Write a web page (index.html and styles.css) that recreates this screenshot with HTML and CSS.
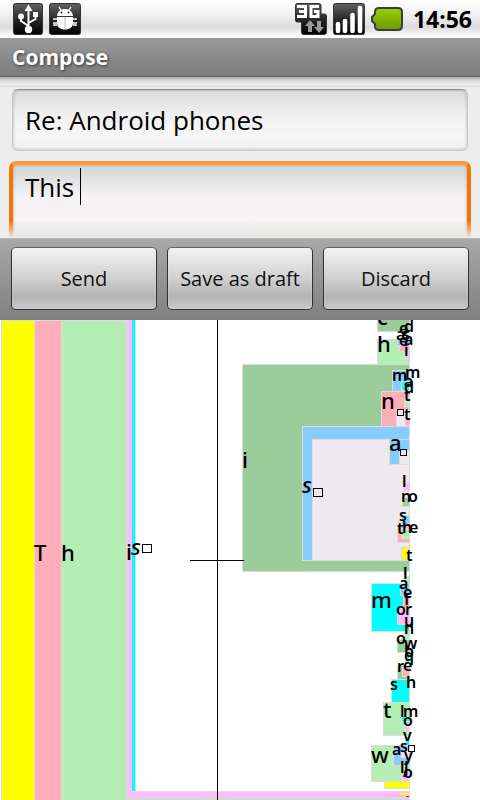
FILE: index.html
```html
<!DOCTYPE html>
<html lang="en">
<head>
<meta charset="utf-8">
<meta name="viewport" content="width=device-width, initial-scale=1">
<title>Compose</title>
<link rel="stylesheet" href="styles.css">
</head>
<body>
<div class="status">
  <svg class="icon" width="30" height="32" viewBox="0 0 30 32" aria-hidden="true">
    <defs><linearGradient id="dark" x1="0" y1="0" x2="0" y2="1"><stop offset="0" stop-color="#626262"/><stop offset=".5" stop-color="#292929"/><stop offset="1" stop-color="#000"/></linearGradient></defs>
    <rect x=".5" y=".5" width="29" height="31" rx="2" fill="url(#dark)" stroke="#333"/>
    <path d="M15.500 5v21M15.500 23L8 18v-5M15.500 20l7-4v-5" fill="none" stroke="#fff" stroke-width="2"/>
    <path d="M15.500 1.500L19.500 8h-8z" fill="#fff"/><circle cx="8" cy="13.500" r="3" fill="#fff"/><rect x="20" y="9" width="5" height="5" fill="#fff"/><circle cx="15.500" cy="26.500" r="3.700" fill="#fff"/>
  </svg>
  <svg class="icon" width="32" height="32" viewBox="0 0 32 32" aria-hidden="true">
    <rect x=".5" y=".5" width="31" height="31" rx="2" fill="url(#dark)" stroke="#333"/>
    <path d="M10 4l2.500 4M22 4l-2.500 4M5 17v-1h3M4 20h4M5 23v-1h3M27 17v-1h-3M28 20h-4M27 23v-1h-3" fill="none" stroke="#fff" stroke-width="1.400"/>
    <path d="M8 13C8.500 3.500 23.500 3.500 24 13zM8 14h16v6c0 4-3 6.500-8 6.500S8 24 8 20z" fill="#fff"/>
    <path d="M16 14v12" stroke="#bbb"/><circle cx="12.500" cy="9.500" r="1" fill="#222"/><circle cx="19.500" cy="9.500" r="1" fill="#222"/>
  </svg>
  <span class="spacer"></span>
  <svg class="icon" width="32" height="32" viewBox="0 0 32 32" aria-hidden="true">
    <path d="M2 .500h22q2 0 2 2V11h3.500q2 0 2 2v16q0 2.500-2 2.500h-21q-2 0-2-2V19H2q-1.500 0-1.500-2V2.500Q.500.500 2 .500z" fill="url(#dark)" stroke="#333"/>
    <path d="M2 3.500h8.500v10H2M4 8.500h6.500M24 3.500h-8v10h7V8.500h-4" fill="none" stroke="#fff" stroke-width="3"/>
    <path d="M15 17l5 6h-3v6h-4v-6h-3zM24 30l5-6h-3v-6h-4v6h-3z" fill="#999"/>
  </svg>
  <svg class="icon" width="32" height="32" viewBox="0 0 32 32" aria-hidden="true">
    <rect x=".5" y=".5" width="31" height="31" rx="2" fill="url(#dark)" stroke="#333"/>
    <path d="M5 21v7M12 18v10M19.500 12v16M27 5v23" stroke="#fff" stroke-width="4.600" stroke-linecap="round"/>
  </svg>
  <svg class="icon" width="32" height="24" viewBox="0 0 32 24" aria-hidden="true">
    <defs><linearGradient id="charge" x1="0" y1="0" x2="0" y2="1"><stop offset="0" stop-color="#98d000"/><stop offset="1" stop-color="#6c9b00"/></linearGradient></defs>
    <path d="M8 1h19q4 0 4 4v14q0 4-4 4H8q-4 0-4-4v-2l-3-3v-4l3-3V5q0-4 4-4z" fill="url(#charge)" stroke="#3c3c44" stroke-width="2"/>
  </svg>
  <time class="clock">14:56</time>
</div>
<header class="titlebar"><h1>Compose</h1></header>
<form class="compose">
  <div class="fields">
    <input class="subject" type="text" aria-label="Subject" value="Re: Android phones">
    <div class="message">
      <textarea class="body" aria-label="Message" spellcheck="false">This </textarea>
      <span class="caret"></span>
    </div>
  </div>
  <div class="actions">
    <button type="button">Send</button>
    <button type="button">Save as draft</button>
    <button type="button">Discard</button>
  </div>
</form>
<main class="keyboard">
<svg class="canvas" viewBox="0 0 480 480" role="img" aria-label="Letter zoom input">
  <defs><clipPath id="field"><path d="M0 0H410V480H0z"/></clipPath></defs>
  <g class="boxes" clip-path="url(#field)">
    <rect class="yellow" x="1" y="0" width="33" height="482"/>
    <rect class="pink" x="34" y="0" width="27" height="482"/>
    <rect class="mint" x="61" y="0" width="349" height="482"/>
    <rect class="lilac" x="126" y="-2" width="284" height="480"/>
    <rect class="cyan" x="132" y="-2" width="10" height="473" stroke="none"/>
    <rect class="white" x="135" y="-2" width="275" height="473"/>
    <path class="cyan" d="M132 0h3v471h-3z"/>
    <rect class="green" x="377" y="-2" width="33" height="13"/>
    <rect class="mint" x="377" y="19" width="33" height="25"/>
    <rect class="blue" x="397" y="19" width="13" height="6"/>
    <rect class="pink" x="399" y="25" width="11" height="6"/>
    <rect class="lilac" x="404" y="32" width="6" height="7"/>
    <rect class="green" x="242" y="44" width="168" height="207"/>
    <rect class="blue" x="392" y="50" width="18" height="21"/>
    <rect class="cyan" x="401" y="61" width="9" height="9"/>
    <rect class="pink" x="381" y="71" width="29" height="35"/>
    <rect class="mint" x="404" y="77" width="6" height="9"/>
    <rect class="pale" x="396" y="89" width="14" height="17"/>
    <rect class="pink" x="405" y="98" width="5" height="7"/>
    <rect class="blue" x="302" y="106" width="108" height="134"/>
    <rect class="pale" x="312" y="119" width="98" height="121"/>
    <rect class="blue" x="389" y="119" width="21" height="25"/>
    <rect class="pale" x="399" y="130" width="11" height="14"/>
    <rect class="lilac" x="403" y="162" width="7" height="9"/>
    <rect class="green" x="402" y="177" width="8" height="9"/>
    <rect class="blue" x="401" y="195" width="9" height="12"/>
    <rect class="pink" x="397" y="205" width="13" height="17"/>
    <rect class="mint" x="401" y="208" width="9" height="10"/>
    <rect class="yellow" x="401" y="227" width="9" height="12"/>
    <rect class="mint" x="405" y="256" width="5" height="7"/>
    <rect class="cyan" x="371" y="263" width="39" height="48"/>
    <rect class="blue" x="400" y="263" width="10" height="12"/>
    <rect class="pink" x="403" y="275" width="7" height="13"/>
    <rect class="lilac" x="397" y="288" width="13" height="16"/>
    <rect class="mint" x="404" y="311" width="6" height="8"/>
    <rect class="green" x="397" y="319" width="13" height="13"/>
    <rect class="cyan" x="405" y="331" width="5" height="12"/>
    <rect class="green" x="397" y="345" width="13" height="14"/>
    <rect class="pink" x="402" y="347" width="8" height="9"/>
    <rect class="cyan" x="391" y="359" width="19" height="23"/>
    <rect class="mint" x="383" y="382" width="27" height="33"/>
    <rect class="cyan" x="401" y="396" width="9" height="5"/>
    <rect class="lilac" x="405" y="405" width="5" height="5"/>
    <rect class="cyan" x="405" y="417" width="5" height="7"/>
    <rect class="mint" x="371" y="425" width="39" height="36"/>
    <rect class="blue" x="393" y="425" width="17" height="20"/>
    <rect class="pale" x="401" y="430" width="9" height="7"/>
    <rect class="lilac" x="401" y="452" width="9" height="8"/>
    <rect class="yellow" x="384" y="461" width="26" height="7"/>
    <path class="yellow" d="M399 473h10v2h-10z"/>
    <path class="red" d="M406 476h3v1h-3z"/>
  </g>
  <path class="edge" d="M409.500 0V480"/>
  <path class="cross" d="M217.500 0V480M190 240.500H244"/>
  <g class="large">
    <text x="34" y="241">T</text><text x="61" y="241">h</text><text x="126" y="240">i</text>
    <text x="242" y="148">i</text><text x="377" y="5">c</text><text x="377" y="32">h</text>
    <text x="381" y="89">n</text><text x="389" y="131">a</text><text x="371" y="288">m</text>
    <text x="383" y="398">t</text><text x="371" y="443">w</text>
    <text class="slant" x="131" y="235">s</text><text class="slant" x="302" y="173">s</text>
  </g>
  <g class="small">
    <text x="399" y="14">e</text><text x="404" y="12">d</text><text x="396" y="20">a</text><text x="402" y="20">s</text><text x="399" y="26">e</text><text x="404" y="25">a</text><text x="404" y="36">i</text>
    <text x="392" y="61">m</text><text x="405" y="58">m</text><text x="404" y="67">a</text><text x="404" y="73">d</text><text x="404" y="81">t</text><text x="404" y="100">t</text>
    <text x="402" y="167">l</text><text x="401" y="182">n</text><text x="408" y="182">o</text><text x="399" y="201">s</text><text x="397" y="214">t</text><text x="402" y="213">h</text><text x="409" y="213">e</text><text x="406" y="241">t</text>
    <text x="403" y="259">l</text><text x="399" y="269">a</text><text x="403" y="278">e</text><text x="404" y="285">f</text><text x="396" y="295">o</text><text x="405" y="295">r</text><text x="404" y="306">u</text><text x="404" y="314">n</text>
    <text x="396" y="324">o</text><text x="404" y="329">w</text><text x="404" y="337">b</text><text x="404" y="341">q</text><text x="397" y="352">r</text><text x="403" y="351">e</text><text x="406" y="368">h</text><text x="390" y="370">s</text>
    <text x="400" y="397">l</text><text x="403" y="397">m</text><text x="403" y="406">o</text><text x="403" y="421">v</text><text x="392" y="435">a</text><text x="400" y="432">s</text><text x="404" y="441">y</text><text x="400" y="453">l</text><text x="404" y="453">j</text><text x="403" y="458">o</text>
  </g>
  <g class="blank">
    <rect x="142.500" y="224.500" width="9" height="8"/><rect x="313.500" y="168.500" width="9" height="8"/>
    <rect x="397.500" y="89.500" width="6" height="6"/><rect x="400.500" y="129.500" width="6" height="6"/><rect x="408.500" y="425.500" width="6" height="6"/>
  </g>
</svg>
</main>
</body>
</html>
```
FILE: styles.css
```css
* { box-sizing: border-box; }
body {
  margin: 0;
  background: #fff;
  color: #000;
  font-family: "Open Sans", "Noto Sans", sans-serif;
  overflow-x: hidden;
}
.status {
  display: flex;
  align-items: center;
  gap: 6px;
  height: 38px;
  padding: 0 8px 0 13px;
  background: linear-gradient(#fff, #f4f4f4 30%, #dcdcdc 72%, #fafafa 94%, #fff);
}
.icon { flex: none; }
.spacer { flex: 1; }
.clock { padding-left: 4px; font: bold 23px/38px "Noto Sans", sans-serif; }
.titlebar {
  height: 39px;
  padding: 0 12px;
  background: linear-gradient(#9a9a9a, #7c7c7c);
  border-bottom: 1px solid #59645b;
}
.titlebar h1 {
  margin: 0;
  color: #fff;
  font-size: 21px;
  line-height: 38px;
  text-shadow: 1px 1px 3px #333;
}
.fields {
  height: 161px;
  padding: 12px 9px 0;
  overflow: hidden;
  background: linear-gradient(#a9aaa9, #dcdedc 4px, #ededed 8px, #dedede 9px, #ededed 11px);
}
.subject, .body {
  display: block;
  width: 100%;
  margin: 0;
  outline: 0;
  color: #000;
  font: 26px/36px "Open Sans", "Noto Sans", sans-serif;
}
.subject {
  width: auto;
  min-width: calc(100% - 6px);
  height: 62px;
  margin: 0 3px 10px;
  padding: 0 12px;
  border: 1px solid #c8c8c8;
  border-top-color: #888;
  border-radius: 6px;
  background: linear-gradient(#d9d9d9, #f0f0f0 40%, #f7f7f7 80%, #f0f0f0);
  box-shadow: inset 0 0 3px #aaa;
}
.message { position: relative; }
.message::after {
  content: "";
  position: absolute;
  inset: 60px 0 auto;
  height: 17px;
  background: linear-gradient(#e9ecea00, #e7eae7);
}
.body {
  height: 110px;
  padding: 4px 12px;
  border: 4px solid #f47500;
  border-top-color: #ff9838;
  border-radius: 7px;
  background: linear-gradient(#d3d3d3, #f4f2f3 30px, #f6f4f5 56px, #e8ebe8 72px);
  box-shadow: inset 0 0 3px #999;
  resize: none;
  overflow: hidden;
}
.caret {
  position: absolute;
  top: 7px;
  left: 71px;
  width: 1px;
  height: 37px;
  background: #000;
}
.actions {
  display: grid;
  grid-template-columns: repeat(3, 1fr);
  gap: 10px;
  height: 82px;
  padding: 8px 11px 10px;
  background: linear-gradient(#a8a8a8, #808080);
  border-top: 1px solid #b9bbb9;
}
.actions button {
  padding: 0;
  border: 1px solid #303030;
  border-top-color: #666;
  border-radius: 5px;
  background: linear-gradient(#f2f2f2, #d4d4d4 45%, #b4b4b4 80%, #cacaca);
  box-shadow: inset 0 0 1px #fff;
  color: #111;
  font: 20px/28px "Open Sans", "Noto Sans", sans-serif;
  white-space: nowrap;
}
.canvas { display: block; width: 100%; height: auto; }
.boxes rect { stroke: #dcdcdc; stroke-width: 1px; shape-rendering: crispEdges; }
.yellow { fill: #ff0; }
.pink { fill: #ffadb9; }
.mint { fill: #b4eeb4; }
.lilac { fill: #ffbbff; }
.cyan { fill: #0ff; }
.white { fill: #fff; }
.green { fill: #9bcd9b; }
.blue { fill: #87ceff; }
.pale { fill: #eee9ee; }
.red { fill: #f00; }
.edge { stroke: #dcdcdc; }
.cross { fill: none; stroke: #000; shape-rendering: crispEdges; }
.large { font: 500 22px "Noto Sans", sans-serif; }
.small { font: 600 16px "Noto Sans", sans-serif; }
.slant { font-style: italic; }
.blank rect { fill: none; stroke: #000; stroke-width: 1px; }
```
